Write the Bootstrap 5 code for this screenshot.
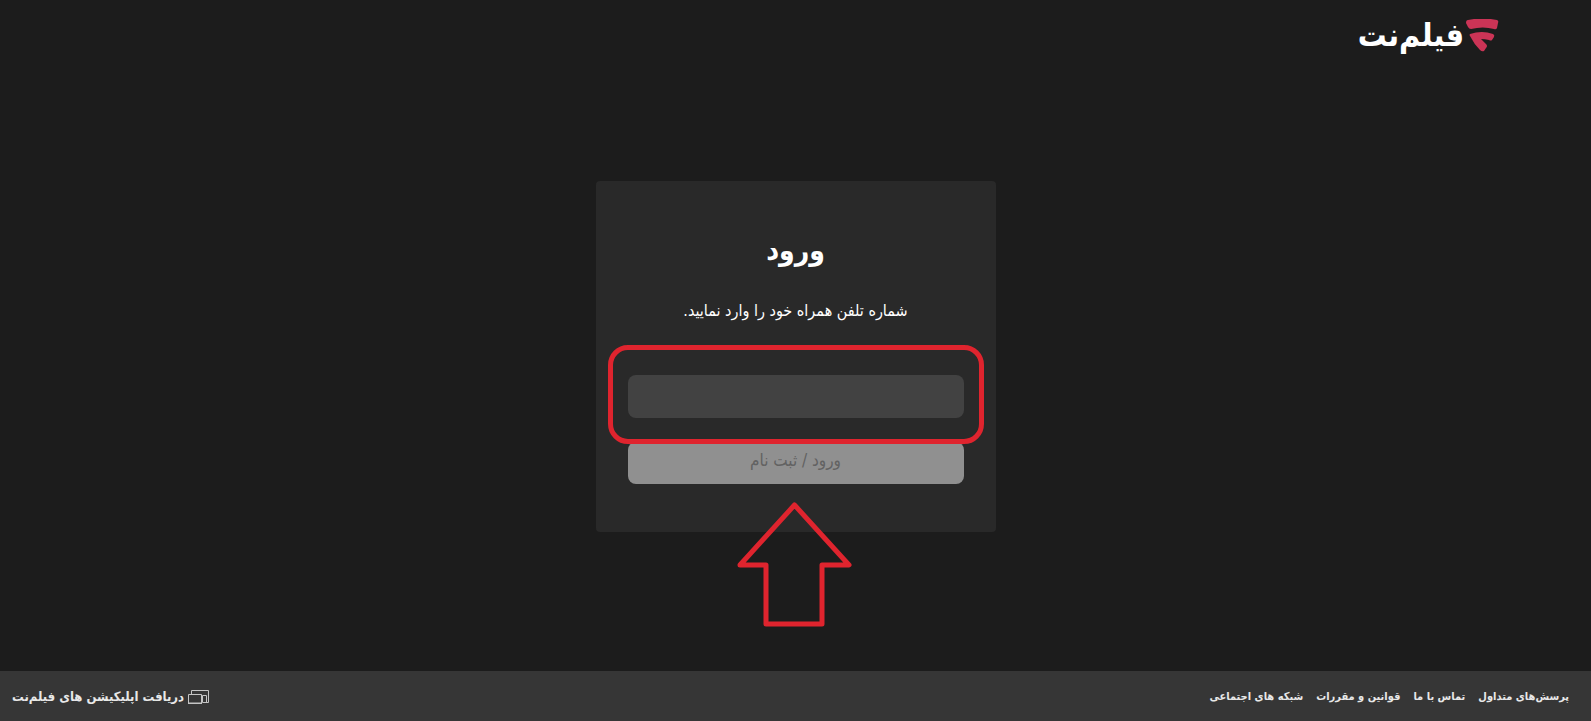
<!DOCTYPE html>
<html lang="fa" dir="rtl">
<head>
<meta charset="utf-8">
<meta name="viewport" content="width=device-width, initial-scale=1">
<title>ورود | فیلم‌نت</title>
<link href="https://cdn.jsdelivr.net/npm/bootstrap@5.3.0/dist/css/bootstrap.min.css" rel="stylesheet">
<style>
body { background: #1c1c1c; color: #fff; font-family: "DejaVu Sans Condensed", "DejaVu Sans", sans-serif; }
.site-header { padding: 16px 92px; }
.brand { height: 38px; gap: 2px; font-size: 32px; line-height: 38px; font-weight: 700; }
.login-main { padding-bottom: 28px; }
.login-card { width: 100%; max-width: 400px; padding: 48px 32px; background: #292929; border-radius: 4px; }
.login-title { font-size: 28px; line-height: 44px; margin-bottom: 26px; }
.login-hint { font-size: 16px; line-height: 24px; margin-bottom: 52px; }
.phone-field { margin-bottom: 24px; }
.phone-input, .phone-input:focus { height: 43px; background: #424242; color: #fff; border: 0; border-radius: 8px; }
.login-btn { height: 42px; padding: 0 0 4px; font-size: 17px; border: 0; border-radius: 8px; }
.login-btn:disabled { background: #909090; color: #626262; opacity: 1; }
.field-mark { inset: -30px -20px -26px; border: 5px solid #df242e; border-radius: 20px; pointer-events: none; }
.arrow-mark { top: calc(100% - 32px); left: 50%; margin-left: -59px; pointer-events: none; }
.site-footer { min-height: 50px; padding: 2px 22px 0 12px; background: #363636; font-weight: 700; }
.site-footer a { color: #e8e8e8; text-decoration: none; }
.footer-links { gap: 13px; font-size: 11px; }
.app-link { gap: 4px; font-size: 13px; }
</style>
</head>
<body class="d-flex flex-column min-vh-100">
<header class="site-header d-flex">
  <a class="brand d-flex align-items-center text-white text-decoration-none" href="#">
    <svg width="33" height="33" viewBox="0 0 33 33" fill="#cb3456" aria-hidden="true">
      <path d="M2 1Q16-2 31 1Q33 2 32 4L31 9Q30 11 28 10Q17 7 5 10Q3 10 2 8L0 4Q0 1 2 1Z"/>
      <path d="M4 15Q16 11 27 15Q29 16 28 18L26 21Q25 22 23 21Q19 20 15 20L20 25Q22 27 20 29L18 32Q16 33 14 31Q8 25 4 17Q3 16 4 15Z"/>
    </svg>
    <span>فیلم‌نت</span>
  </a>
</header>
<main class="login-main flex-grow-1 d-flex justify-content-center align-items-center">
  <form class="login-card position-relative text-center">
    <h1 class="login-title fw-bold">ورود</h1>
    <label class="login-hint d-block" for="phone">شماره تلفن همراه خود را وارد نمایید.</label>
    <div class="phone-field position-relative">
      <input class="phone-input form-control" type="tel" id="phone">
      <div class="field-mark position-absolute z-1"></div>
    </div>
    <button class="login-btn btn w-100" type="submit" disabled>ورود / ثبت نام</button>
    <svg class="arrow-mark position-absolute" width="116" height="128" viewBox="0 0 116 128" fill="none" stroke="#df242e" stroke-width="5" stroke-linejoin="round" aria-hidden="true">
      <path d="M57.500 5L112 65H85V124H29V65H3Z"/>
    </svg>
  </form>
</main>
<footer class="site-footer d-flex flex-wrap align-items-center justify-content-between">
  <nav class="footer-links d-flex flex-wrap">
    <a href="#">پرسش‌های متداول</a>
    <a href="#">تماس با ما</a>
    <a href="#">قوانین و مقررات</a>
    <a href="#">شبکه های اجتماعی</a>
  </nav>
  <a class="app-link d-flex align-items-center" href="#">
    <svg width="22" height="15" viewBox="0 0 22 15" fill="none" stroke="#c4c4c4" aria-hidden="true">
      <path d="M3.500 4V.5H20.500V12.500H18M.5 4.500H13.500V13H.5ZM0 13.500H14M14.500 5.500H18.500V12.500H14.500Z"/>
    </svg>
    <span>دریافت اپلیکیشن های فیلم‌نت</span>
  </a>
</footer>
<script src="https://cdn.jsdelivr.net/npm/bootstrap@5.3.0/dist/js/bootstrap.bundle.min.js"></script>
</body>
</html>
